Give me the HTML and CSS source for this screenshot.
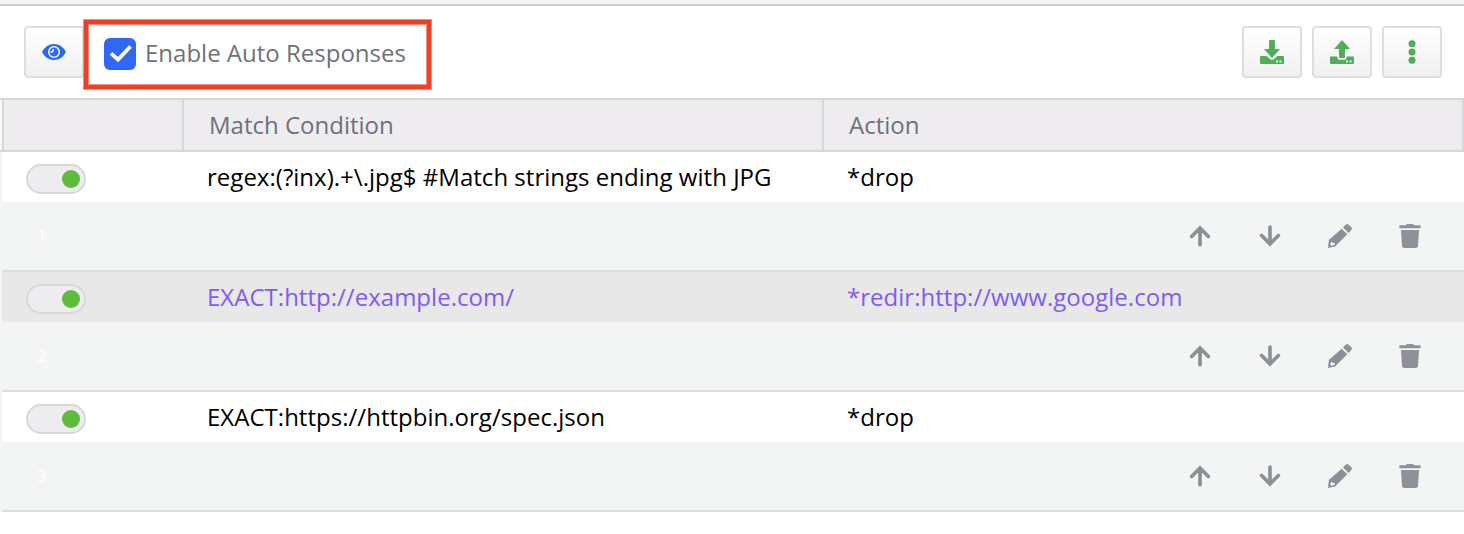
FILE: index.html
```html
<!DOCTYPE html>
<html lang="en">
<head>
<meta charset="utf-8">
<title>Auto Responses</title>
<link rel="stylesheet" href="styles.css">
</head>
<body>
<svg class="defs" aria-hidden="true">
  <symbol id="up" viewBox="0 0 24 24"><path d="M12 20.800V5M3.600 12.500 12 4.100l8.400 8.400" fill="none" stroke="currentColor" stroke-width="3.700" stroke-linecap="round"/></symbol>
  <symbol id="down" viewBox="0 0 24 24"><path d="M12 3.200V19M3.600 11.500 12 19.900l8.400-8.400" fill="none" stroke="currentColor" stroke-width="3.700" stroke-linecap="round"/></symbol>
  <symbol id="pencil" viewBox="0 0 24 24"><path fill="currentColor" fill-rule="evenodd" d="M13.700 4.800 19.300 10.300 7.200 22.400 0 24l.8-8zM3.200 17.800 2.200 20.800l1.200 1 3.200-1 .2-1.900-1.900-.1z"/><path fill="currentColor" d="m15 3.500 2.400-2.400q1.900-1.900 3.600-.2l2.100 2.100q1.700 1.700-.2 3.600L20.500 9z"/></symbol>
  <symbol id="trash" viewBox="0 0 24 24"><path fill="currentColor" d="M2.200 1.200h5.500Q8.500 0 10 0h4q1.500 0 2.300 1.200h5.500q.9 0 .9.900v1.500q0 .6-.6.600H1.900q-.6 0-.6-.6V2.100q0-.9.900-.9M3 6h18l-1 15.800Q19.800 24 17.600 24H6.400Q4.200 24 4 21.800z"/></symbol>
</svg>
<div class="topline"></div>
<header class="toolbar">
  <button class="btn eye" aria-label="Preview"><svg width="24" height="16" viewBox="0 0 24 16"><path fill="currentColor" d="M0 8Q4.300 0 12 0t12 8q-4.300 8-12 8T0 8"/><circle cx="12" cy="8" r="5.300" fill="none" stroke="#fafafa" stroke-width="1.500"/><path d="M8.500 8q2.700.2 2.900-3" fill="none" stroke="#fafafa" stroke-width="1.600"/></svg></button>
  <label class="enable"><span class="check"><svg width="32" height="32" viewBox="0 0 32 32"><path d="m7 15.300 7 6.200L26.500 8.500" fill="none" stroke="#fff" stroke-width="3.800"/></svg></span><span class="enable-text">Enable Auto Responses</span></label>
  <div class="tools">
    <button class="btn" aria-label="Import"><svg width="24" height="24" viewBox="0 0 24 24"><path fill="currentColor" d="M10 0h4q1 0 1 1v8h5l-8 9-8-9h5V1q0-1 1-1M1 16h5.500l3.800 3.300q1.700 1.400 3.400 0l3.800-3.300H23q1 0 1 1v6q0 1-1 1H1q-1 0-1-1v-6q0-1 1-1"/><path fill="#f5f5f5" d="M16 20.500h2v2h-2zM19.500 20.500h2v2h-2z"/></svg></button>
    <button class="btn" aria-label="Export"><svg width="24" height="24" viewBox="0 0 24 24"><path fill="currentColor" d="m12 0 8 9h-5v8q0 1-1 1h-4q-1 0-1-1V9H4zM1 16.500h6.500V18q0 1.800 1.800 1.800h5.400q1.800 0 1.800-1.800v-1.500H23q1 0 1 1V23q0 1-1 1H1q-1 0-1-1v-5.500q0-1 1-1"/><path fill="#f5f5f5" d="M16 20.500h2v2h-2zM19.500 20.500h2v2h-2z"/></svg></button>
    <button class="btn" aria-label="More"><svg width="8" height="24" viewBox="0 0 8 24"><g fill="currentColor"><circle cx="4" cy="3.700" r="3.500"/><circle cx="4" cy="12" r="3.500"/><circle cx="4" cy="20.300" r="3.500"/></g></svg></button>
  </div>
</header>
<main class="table">
  <div class="head"><div class="cell"></div><div class="cell">Match Condition</div><div class="cell">Action</div></div>
  <section class="rule">
    <div class="row"><div class="switch"><i class="knob"></i></div><div class="value">regex:(?inx).+\.jpg$ #Match strings ending with JPG</div><div class="value">*drop</div></div>
    <div class="sub"><span class="num">1</span><div class="icons"><svg><use href="#up"/></svg><svg><use href="#down"/></svg><svg><use href="#pencil"/></svg><svg><use href="#trash"/></svg></div></div>
  </section>
  <section class="rule selected">
    <div class="row"><div class="switch"><i class="knob"></i></div><div class="value">EXACT:http://example.com/</div><div class="value">*redir:http://www.google.com</div></div>
    <div class="sub"><span class="num">2</span><div class="icons"><svg><use href="#up"/></svg><svg><use href="#down"/></svg><svg><use href="#pencil"/></svg><svg><use href="#trash"/></svg></div></div>
  </section>
  <section class="rule">
    <div class="row"><div class="switch"><i class="knob"></i></div><div class="value">EXACT:https://httpbin.org/spec.json</div><div class="value">*drop</div></div>
    <div class="sub"><span class="num">3</span><div class="icons"><svg><use href="#up"/></svg><svg><use href="#down"/></svg><svg><use href="#pencil"/></svg><svg><use href="#trash"/></svg></div></div>
  </section>
</main>
</body>
</html>
```
FILE: styles.css
```css
* { box-sizing: border-box; }
body { margin: 0; height: 534px; overflow: hidden; background: #fff; font: 24px/32px "Open Sans", "Noto Sans", sans-serif; color: #000; }
.defs { display: none; }
.topline { height: 6px; background: #f3f3f3; border-bottom: 2px solid #ccc; }
.toolbar { display: flex; height: 92px; padding: 13px 22px 0 24px; }
.btn { display: flex; align-items: center; justify-content: center; width: 60px; height: 52px; margin: 7px 0 0; padding: 0; border: 2px solid #dadfe1; border-radius: 4px; background: linear-gradient(#fff, #f0f0f0); color: #4fae5a; }
.eye { flex: none; width: 60px; color: #2d65f6; border-radius: 4px 0 0 4px; }
.btn svg, .check svg { display: block; }
.enable { position: relative; display: flex; align-items: center; width: 347px; height: 69px; margin-top: 1px; padding-left: 16px; border: 4px solid #ee4023; background: #fff; box-shadow: 0 0 0 1px #f38e7b, inset 0 0 0 1px #f38e7b; color: #6e717c; }
.check { width: 32px; height: 32px; margin-top: -1px; border-radius: 6px; background: #2f67f6; }
.enable-text { margin: -3px 0 0 9px; white-space: nowrap; }
.tools { display: flex; gap: 10px; margin-left: auto; }
.table { display: block; }
.head { display: grid; grid-template-columns: 180px 640px 1fr; height: 54px; padding-left: 2px; border: solid #d8d7d9; border-width: 2px 0; background: linear-gradient(90deg, #f8f8f8 2px, #efecef 2px); color: #6e717c; }
.cell { border-left: 2px solid #d8d7d9; padding: 9px 0 0 25px; }
.cell:last-child { border-right: 2px solid #d8d7d9; }
.rule { padding-left: 2px; background: #f4f5f5; }
.row { display: grid; grid-template-columns: 181px 640px 1fr; height: 50px; padding-left: 24px; background: #fff; }
.selected .row { background: #e8e8e8; color: #825af6; }
.switch { display: flex; justify-content: flex-end; align-items: center; width: 60px; height: 30px; margin-top: 12px; padding-right: 4px; border: 2px solid #d8d7d9; border-radius: 15px; background: #efecef; }
.knob { width: 18px; height: 18px; border-radius: 9px; background: #5dbc3a; }
.value { padding-top: 9px; white-space: nowrap; letter-spacing: 0.02px; }
.sub { display: flex; justify-content: space-between; height: 70px; padding: 22px 42px 0 35px; background: #f3f5f5; border-bottom: 2px solid #dadfe1; }
.num { margin-top: -4px; color: #fff; font-size: 17px; }
.icons { display: flex; gap: 46px; color: #8f9097; }
.icons svg { width: 24px; height: 24px; }
```
